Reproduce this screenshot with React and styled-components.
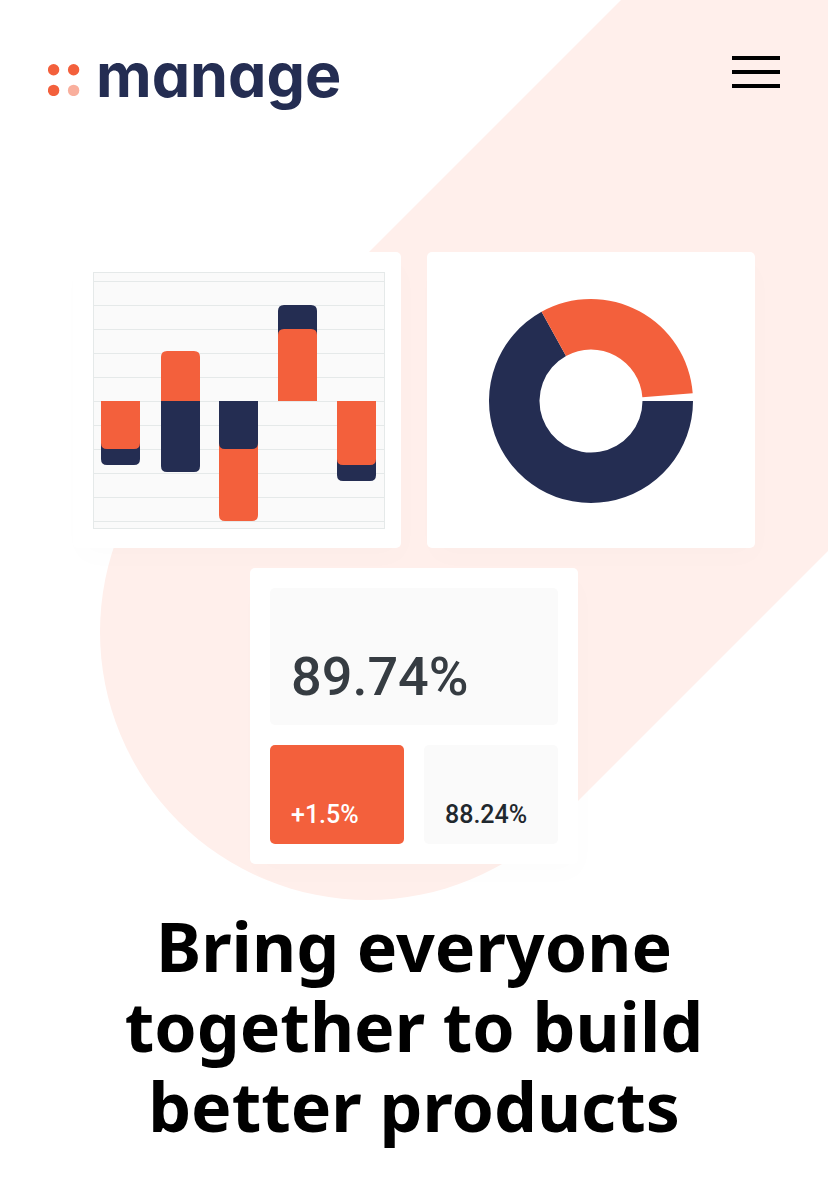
import React from "react";
import styled, { createGlobalStyle, css } from "styled-components";

const color = {
  orange: "#f3603c",
  orangeSoft: "#f9af9d",
  navy: "#242d52",
  blush: "#ffefeb",
  panel: "#fafafa",
  rule: "#e5e9e9",
};

const GlobalStyle = createGlobalStyle`
  *, *::before, *::after { box-sizing: border-box; }
  body { margin: 0; background: #fff; }
`;

const Page = styled.div`
  position: relative;
  min-height: 100vh;
  overflow: hidden;
  color: #000;
  font-family: "Noto Sans", "Open Sans", sans-serif;
`;

const Backdrop = styled.svg`
  position: absolute;
  top: 0;
  left: 50%;
  width: 828px;
  height: 900px;
  margin-left: -414px;
  overflow: visible;
  pointer-events: none;
`;

const Header = styled.header`
  position: relative;
  display: flex;
  align-items: flex-start;
  justify-content: space-between;
  padding: 48px 48px 0;
`;

const Logo = styled.a`
  display: flex;
  align-items: flex-start;
  gap: 16px;
  height: 64px;
  color: ${color.navy};
  text-decoration: none;
`;

const LogoDots = styled.svg`
  display: block;
  width: 32px;
  height: 32px;
  margin-top: 16px;
`;

const Wordmark = styled.span`
  font: 700 61px/54px Inter, sans-serif;
  font-feature-settings: "cv11" 1;
`;

const MenuButton = styled.button`
  display: flex;
  flex-direction: column;
  gap: 10px;
  width: 48px;
  margin-top: 8px;
  padding: 0;
  border: 0;
  background: none;
  cursor: pointer;
`;

const MenuBar = styled.span`
  display: block;
  height: 4px;
  background: #000;
`;

const Main = styled.main`
  position: relative;
  padding: 140px 48px 48px;
`;

const Illustration = styled.section`
  display: grid;
  grid-template-columns: 1fr 1fr;
  gap: 20px 26px;
  max-width: 682px;
  margin: 0 auto;
`;

const Card = styled.article`
  padding: 20px;
  border-radius: 5px;
  background: #fff;
  box-shadow: 4px 12px 28px rgba(29, 30, 37, 0.01);
  ${(p) =>
    p.$centered &&
    css`
      grid-column: 1 / -1;
      justify-self: center;
      width: calc(50% - 13px);
    `}
`;

const Chart = styled.svg`
  display: block;
  width: 100%;
  height: auto;
  overflow: visible;
`;

const Stats = styled.div`
  display: grid;
  grid-template-columns: 1fr 1fr;
  gap: 20px;
`;

const Stat = styled.div`
  display: flex;
  align-items: flex-end;
  height: 99px;
  padding: 0 21px 13px;
  border-radius: 5px;
  background: ${(p) => (p.$accent ? color.orange : color.panel)};
  color: ${(p) => (p.$accent ? "#fff" : "#1f282e")};
  font: 500 25px/32px Roboto, sans-serif;
  ${(p) =>
    p.$large &&
    css`
      grid-column: 1 / -1;
      height: 137px;
      padding-bottom: 16px;
      color: #363c42;
      font-size: 54px;
      line-height: 64px;
    `}
`;

const Title = styled.h1`
  max-width: 640px;
  margin: 42px auto 0;
  font-size: 68px;
  font-weight: 700;
  line-height: 80px;
  text-align: center;
`;

const BAR_WIDTH = 39;
const gridLines = Array.from({ length: 11 }, (_, i) => 9 + i * 24);

/* Each bar grows from the zero line; later entries are painted on top. */
const bars = [
  { x: 8, to: 193, fill: color.navy },
  { x: 8, to: 177, fill: color.orange },
  { x: 68, to: 79, fill: color.orange },
  { x: 68, to: 200, fill: color.navy },
  { x: 126, to: 249, fill: color.orange },
  { x: 126, to: 177, fill: color.navy },
  { x: 185, to: 33, fill: color.navy },
  { x: 185, to: 57, fill: color.orange },
  { x: 244, to: 209, fill: color.navy },
  { x: 244, to: 193, fill: color.orange },
];

function barPath(x, to) {
  const zero = 129;
  const r = to > zero ? 6 : -6;
  const right = x + BAR_WIDTH;
  return `M${x} ${zero}H${right}V${to - r}Q${right} ${to} ${right - 6} ${to}H${x + 6}Q${x} ${to} ${x} ${to - r}Z`;
}

function BarChart() {
  return (
    <Chart viewBox="0 0 288 256" role="img" aria-label="Bar chart">
      <rect x="0.5" y="0.5" width="291" height="256" fill={color.panel} stroke={color.rule} />
      {gridLines.map((y) => (
        <path key={y} d={`M1 ${y + 0.5}H291`} stroke={color.rule} />
      ))}
      {bars.map((b) => (
        <path key={`${b.x}-${b.to}`} d={barPath(b.x, b.to)} fill={b.fill} />
      ))}
    </Chart>
  );
}

function ringSlice(from, to) {
  const at = (r, deg) => {
    const a = (deg * Math.PI) / 180;
    return `${(r * Math.cos(a)).toFixed(2)} ${(r * Math.sin(a)).toFixed(2)}`;
  };
  const large = to - from > 180 ? 1 : 0;
  return `M${at(102, from)}A102 102 0 ${large} 1 ${at(102, to)}L${at(51.5, to)}A51.5 51.5 0 ${large} 0 ${at(51.5, from)}Z`;
}

function DonutChart() {
  return (
    <Chart viewBox="-144 -129 288 256" role="img" aria-label="Donut chart">
      <path d={ringSlice(0, 241)} fill={color.navy} />
      <path d={ringSlice(241, 355.7)} fill={color.orange} />
    </Chart>
  );
}

export default function App() {
  return (
    <Page>
      <GlobalStyle />
      <Backdrop viewBox="0 0 828 900" aria-hidden="true">
        <path d="M368 632L1768 -768" stroke={color.blush} strokeWidth="536" strokeLinecap="round" />
      </Backdrop>
      <Header>
        <Logo href="#">
          <LogoDots viewBox="0 0 32 32" aria-hidden="true">
            <g fill={color.orange}>
              <circle cx="5.6" cy="5.7" r="5.7" />
              <circle cx="25.6" cy="5.7" r="5.7" />
              <circle cx="5.6" cy="26.4" r="5.7" />
            </g>
            <circle cx="25.6" cy="26.4" r="5.7" fill={color.orangeSoft} />
          </LogoDots>
          <Wordmark>manage</Wordmark>
        </Logo>
        <MenuButton type="button" aria-label="Open menu">
          <MenuBar />
          <MenuBar />
          <MenuBar />
        </MenuButton>
      </Header>
      <Main>
        <Illustration>
          <Card>
            <BarChart />
          </Card>
          <Card>
            <DonutChart />
          </Card>
          <Card $centered>
            <Stats>
              <Stat $large>89.74%</Stat>
              <Stat $accent>+1.5%</Stat>
              <Stat>88.24%</Stat>
            </Stats>
          </Card>
        </Illustration>
        <Title>Bring everyone together to build better products</Title>
      </Main>
    </Page>
  );
}
